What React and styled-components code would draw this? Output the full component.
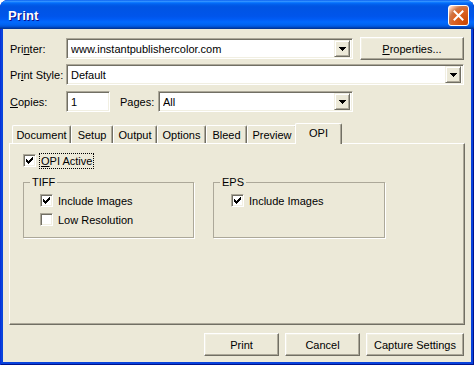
import React from 'react';
import styled, { createGlobalStyle } from 'styled-components';

const GlobalStyle = createGlobalStyle`
  html, body {
    margin: 0;
    padding: 0;
    background: #ffffff;
  }
  body {
    font-family: "Liberation Sans", Arial, sans-serif;
    font-size: 11px;
    color: #000;
  }
`;

const Window = styled.div`
  width: 474px;
  height: 365px;
  box-sizing: border-box;
  display: flex;
  flex-direction: column;
  background: #0843dc;
  border-radius: 8px 8px 0 0;
  overflow: hidden;
  box-shadow: inset 1px 0 #0831d9, inset -1px -1px #00138c;
`;

const TitleBar = styled.div`
  height: 29px;
  flex: none;
  display: flex;
  align-items: center;
  justify-content: space-between;
  padding: 2px 5px 0 8px;
  box-sizing: border-box;
  background: linear-gradient(
    180deg,
    #0058ee 0%,
    #3a93ff 4%,
    #288eff 6%,
    #127dff 8%,
    #036ffc 10%,
    #0262ee 14%,
    #0057e5 20%,
    #0054e3 24%,
    #0055eb 56%,
    #005bf5 66%,
    #026afe 76%,
    #0062ef 86%,
    #0052d6 92%,
    #0040ab 96%,
    #003092 100%
  );
`;

const Title = styled.span`
  font-family: "Liberation Sans", Arial, sans-serif;
  font-weight: bold;
  font-size: 13px;
  color: #fff;
  text-shadow: 1px 1px #0f1089;
  letter-spacing: 0.2px;
`;

const CloseButton = styled.div`
  width: 21px;
  height: 21px;
  box-sizing: border-box;
  margin-top: -1px;
  border: 1px solid #fff;
  border-radius: 3px;
  display: flex;
  align-items: center;
  justify-content: center;
  background: radial-gradient(
    circle at 90% 90%,
    #cc4600 0%,
    #dc6527 55%,
    #cd7546 70%,
    #ffccb2 90%,
    #ffffff 100%
  );
`;

const Body = styled.div`
  flex: 1;
  margin: 0 3px 3px;
  background: #ece9d8;
  padding: 8px 6px 0;
  display: flex;
  flex-direction: column;
`;

const Row = styled.div`
  display: flex;
  align-items: center;
  height: ${(p) => p.$h || 21}px;
  margin-top: ${(p) => p.$top || 0}px;
`;

const Label = styled.span`
  flex: none;
  width: ${(p) => p.$w || 57}px;
  padding-left: ${(p) => (p.$pad === undefined ? 1 : p.$pad)}px;
  box-sizing: border-box;
  white-space: nowrap;
`;

const Sunken = styled.div`
  box-sizing: border-box;
  height: 21px;
  background: #fff;
  border: 1px solid;
  border-color: #aca899 #fff #fff #aca899;
  box-shadow: inset 1px 1px #716f64, inset -1px -1px #f1efe2;
  display: flex;
  align-items: center;
  padding: 2px 2px 2px 4px;
  white-space: nowrap;
  overflow: hidden;
`;

const Combo = styled(Sunken)`
  width: ${(p) => (p.$w ? `${p.$w}px` : 'auto')};
  flex: ${(p) => (p.$w ? 'none' : '1')};
  margin-right: ${(p) => p.$mr || 0}px;
`;

const ComboText = styled.span`
  flex: 1;
  overflow: hidden;
`;

const DropButton = styled.div`
  flex: none;
  width: 16px;
  height: 17px;
  box-sizing: border-box;
  background: #ece9d8;
  border: 1px solid;
  border-color: #f1efe2 #716f64 #716f64 #f1efe2;
  box-shadow: inset 1px 1px #fff, inset -1px -1px #aca899;
  display: flex;
  align-items: center;
  justify-content: center;
`;

const TextBox = styled(Sunken)`
  width: ${(p) => p.$w}px;
  flex: none;
`;

const Button = styled.div`
  box-sizing: border-box;
  width: ${(p) => p.$w}px;
  height: 23px;
  flex: none;
  background: #ece9d8;
  border: 1px solid;
  border-color: #fff #716f64 #716f64 #fff;
  box-shadow: inset -1px -1px #aca899, inset 1px 1px #f1efe2;
  display: flex;
  align-items: center;
  justify-content: center;
  margin-left: ${(p) => p.$ml || 0}px;
`;

const TabArea = styled.div`
  margin-top: 11px;
  display: flex;
  flex-direction: column;
`;

const TabStrip = styled.div`
  height: 20px;
  display: flex;
  align-items: flex-end;
  padding-left: 3px;
`;

const Tab = styled.div`
  box-sizing: border-box;
  flex: none;
  width: ${(p) => p.$w + (p.$active ? 4 : 0)}px;
  height: ${(p) => (p.$active ? 21 : 18)}px;
  margin: ${(p) => (p.$active ? '0 -2px -1px' : '0')};
  position: relative;
  z-index: ${(p) => (p.$active ? 2 : 1)};
  background: #ece9d8;
  border-top: 1px solid #fff;
  border-left: 1px solid #fff;
  border-right: 1px solid #716f64;
  box-shadow: inset -1px 0 #aca899;
  border-radius: 2px 2px 0 0;
  display: flex;
  justify-content: center;
  padding-top: 3px;
`;

const Panel = styled.div`
  box-sizing: border-box;
  height: 182px;
  border: 1px solid;
  border-color: #fff #716f64 #716f64 #fff;
  box-shadow: inset -1px -1px #aca899;
  padding: 8px 0 0 13px;
  position: relative;
  z-index: 1;
`;

const CheckRow = styled.div`
  display: flex;
  align-items: center;
  height: ${(p) => p.$h || 13}px;
  gap: 3px;
`;

const Box = styled.span`
  box-sizing: border-box;
  flex: none;
  width: 13px;
  height: 13px;
  background: #fff;
  border: 1px solid;
  border-color: #aca899 #fff #fff #aca899;
  box-shadow: inset 1px 1px #716f64, inset -1px -1px #f1efe2;
  display: flex;
  align-items: center;
  justify-content: center;
  margin-right: 1px;
`;

const CheckText = styled.span`
  white-space: nowrap;
  padding: 1px 1px;
  outline: ${(p) => (p.$focus ? '1px dotted #000' : 'none')};
`;

const Groups = styled.div`
  display: flex;
  align-items: stretch;
  gap: 19px;
  margin-top: 7px;
`;

const Group = styled.fieldset`
  box-sizing: border-box;
  width: ${(p) => p.$w}px;
  margin: 0;
  border: 1px solid #aca899;
  box-shadow: 1px 1px 0 #fff;
  padding: 0;
`;

const Legend = styled.legend`
  margin-left: 6px;
  padding: 0 2px;
  line-height: 13px;
`;

const GroupBody = styled.div`
  display: flex;
  flex-direction: column;
  gap: 6px;
  padding: 5px 0 11px ${(p) => p.$pl}px;
`;

const Footer = styled.div`
  display: flex;
  justify-content: flex-end;
  margin-top: 8px;
  padding-right: 1px;
`;

const Check = () => (
  <svg width="7" height="7" viewBox="0 0 7 7" shapeRendering="crispEdges">
    {[2, 3, 4, 3, 2, 1, 0].map((y, x) => (
      <rect key={x} x={x} y={y} width="1" height="3" fill="#000" />
    ))}
  </svg>
);

const Arrow = () => (
  <svg width="7" height="4" viewBox="0 0 7 4" shapeRendering="crispEdges">
    <rect x="0" y="0" width="7" height="1" fill="#000" />
    <rect x="1" y="1" width="5" height="1" fill="#000" />
    <rect x="2" y="2" width="3" height="1" fill="#000" />
    <rect x="3" y="3" width="1" height="1" fill="#000" />
  </svg>
);

const CloseX = () => (
  <svg width="11" height="11" viewBox="0 0 11 11">
    <path d="M1.5 1.5 L9.5 9.5 M9.5 1.5 L1.5 9.5" stroke="#fff" strokeWidth="2" strokeLinecap="square" />
  </svg>
);

function CheckBox({ label, checked, focus }) {
  return (
    <CheckRow $h={focus ? 17 : 13}>
      <Box>{checked && <Check />}</Box>
      <CheckText $focus={focus}>{label}</CheckText>
    </CheckRow>
  );
}

function Select({ value, width, mr }) {
  return (
    <Combo $w={width} $mr={mr}>
      <ComboText>{value}</ComboText>
      <DropButton>
        <Arrow />
      </DropButton>
    </Combo>
  );
}

const tabs = [
  { name: 'Document', w: 59 },
  { name: 'Setup', w: 42 },
  { name: 'Output', w: 44 },
  { name: 'Options', w: 49 },
  { name: 'Bleed', w: 41 },
  { name: 'Preview', w: 50 },
  { name: 'OPI', w: 43, active: true },
];

export default function App() {
  return (
    <>
      <GlobalStyle />
      <Window>
        <TitleBar>
          <Title>Print</Title>
          <CloseButton>
            <CloseX />
          </CloseButton>
        </TitleBar>
        <Body>
          <Row $h={23}>
            <Label>
              Pri<u>n</u>ter:
            </Label>
            <Select value="www.instantpublishercolor.com" width={287} />
            <Button $w={104} $ml={7}>
              <span>
                <u>P</u>roperties...
              </span>
            </Button>
          </Row>
          <Row $top={4}>
            <Label>
              Pr<u>i</u>nt Style:
            </Label>
            <Select value="Default" mr={1} />
          </Row>
          <Row $top={6}>
            <Label>
              <u>C</u>opies:
            </Label>
            <TextBox $w={44}>1</TextBox>
            <Label $w={48} $pad={10}>
              Pa<u>g</u>es:
            </Label>
            <Select value="All" width={195} />
          </Row>
          <TabArea>
            <TabStrip>
              {tabs.map((t) => (
                <Tab key={t.name} $w={t.w} $active={t.active}>
                  {t.name}
                </Tab>
              ))}
            </TabStrip>
            <Panel>
              <CheckBox
                checked
                focus
                label={
                  <>
                    <u>O</u>PI Active
                  </>
                }
              />
              <Groups>
                <Group $w={171}>
                  <Legend>TIFF</Legend>
                  <GroupBody $pl={16}>
                    <CheckBox checked label="Include Images" />
                    <CheckBox label="Low Resolution" />
                  </GroupBody>
                </Group>
                <Group $w={172}>
                  <Legend>EPS</Legend>
                  <GroupBody $pl={17}>
                    <CheckBox checked label="Include Images" />
                  </GroupBody>
                </Group>
              </Groups>
            </Panel>
          </TabArea>
          <Footer>
            <Button $w={75}>Print</Button>
            <Button $w={75} $ml={6}>
              Cancel
            </Button>
            <Button $w={98} $ml={6}>
              Capture Settings
            </Button>
          </Footer>
        </Body>
      </Window>
    </>
  );
}
